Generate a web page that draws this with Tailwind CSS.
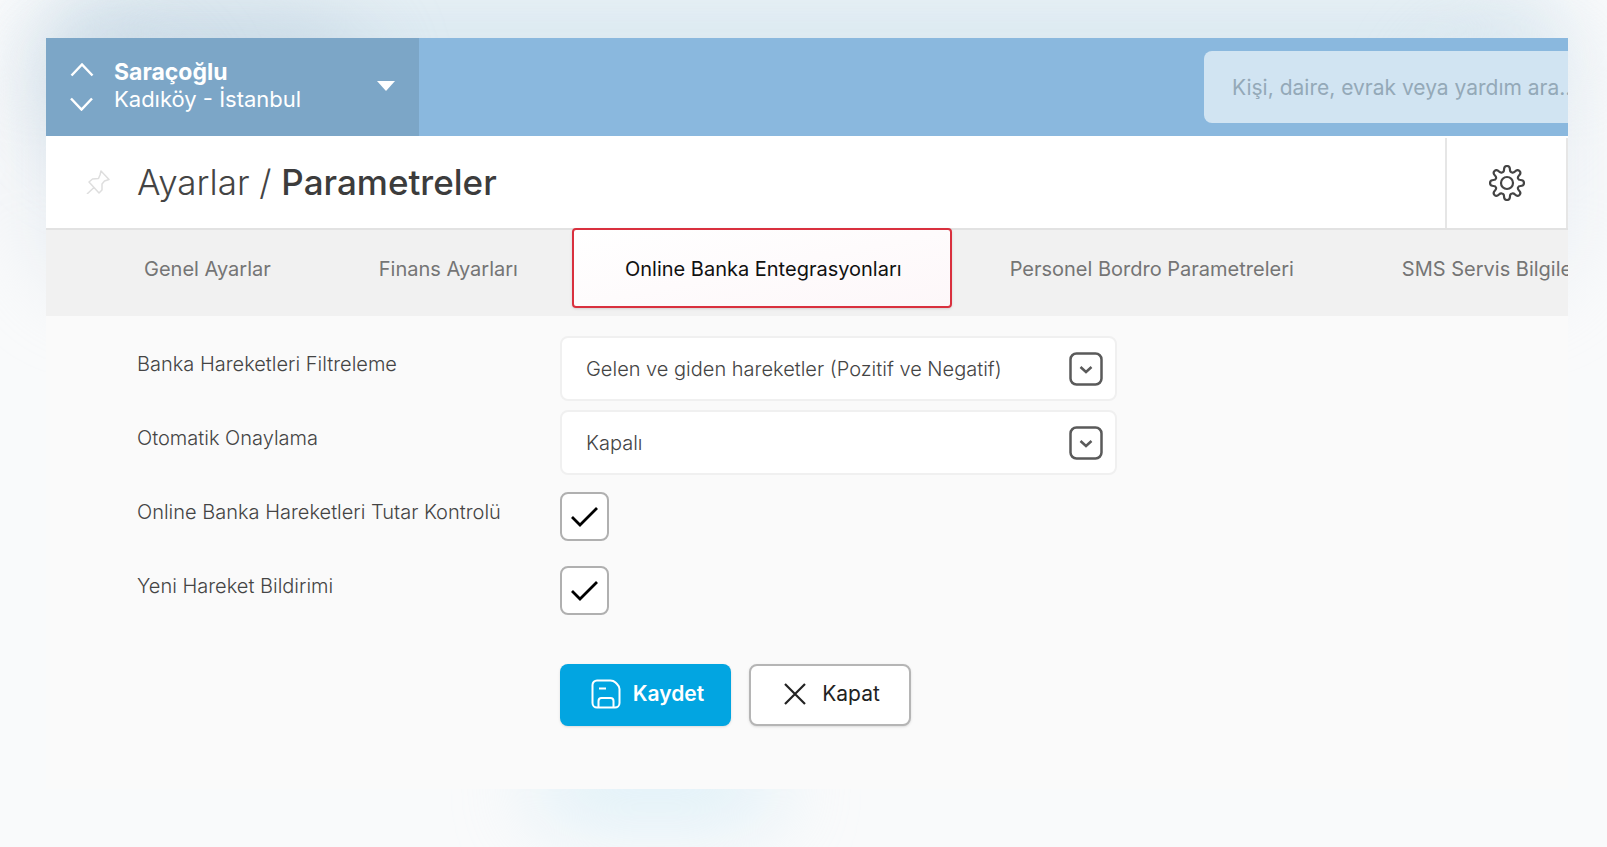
<!DOCTYPE html>
<html lang="tr">

<head>
    <meta charset="UTF-8" />
    <meta name="viewport" content="width=device-width, initial-scale=1.0" />
    <title>Ayarlar / Parametreler</title>
    <script src="https://cdn.jsdelivr.net/npm/@tailwindcss/browser@4"></script>
</head>

<body class="relative min-h-screen overflow-hidden bg-[#f9fafb] font-['Inter',sans-serif] text-[#444]">
    <!-- Soft background glow -->
    <div class="absolute inset-x-10 -top-4 h-36 rounded-full bg-[#d2e3ee]/80 blur-2xl"></div>
    <div class="absolute top-4 left-12 h-36 w-80 rounded-full bg-[#bccfdd]/60 blur-2xl"></div>
    <div class="absolute top-10 left-8 h-64 w-40 rounded-full bg-[#d5dfea]/50 blur-2xl"></div>
    <div class="absolute top-10 right-6 h-64 w-40 rounded-full bg-[#dfe8ef]/50 blur-2xl"></div>
    <div class="absolute bottom-8 left-1/3 h-14 w-60 rounded-full bg-[#cdeaf6]/80 blur-2xl"></div>

    <div class="relative mx-[39px] mt-[38px] ml-[46px] min-h-[751px] overflow-hidden bg-[#fafafa]">
        <!-- Top bar -->
        <header class="flex h-[98px] justify-between bg-[#8ab8de]">
            <button type="button" class="flex w-[373px] items-center bg-[#7ca6c7] pr-6 pb-0.5 pl-6 text-left text-white">
                <svg class="h-[50px] w-6" viewBox="0 0 24 50" fill="none" stroke="currentColor" stroke-width="2.500">
                    <path d="M1.500 14.500 12 3.500l10.500 11M1 37.500l10.500 11 10.500-11" />
                </svg>
                <span class="ml-5 flex-1 text-[22px] leading-[27px]">
                    <strong class="block text-[23px] font-bold">Saraçoğlu</strong>
                    <span class="block">Kadıköy - İstanbul</span>
                </span>
                <svg class="h-[10px] w-[18px]" viewBox="0 0 18 10" fill="currentColor"><path d="M0 0h18L9 10z" /></svg>
            </button>
            <div class="flex w-[364px] items-center">
                <input type="search" aria-label="Arama" placeholder="Kişi, daire, evrak veya yardım ara..."
                    class="h-[72px] w-[420px] shrink-0 rounded-lg bg-[#d1e4f2] px-7 text-[21px] text-[#555] placeholder:text-[#94a9b8]" />
            </div>
        </header>

        <!-- Page title -->
        <div class="flex h-[92px] items-center bg-white">
            <button type="button" aria-label="Sabitle" class="ml-10 text-[#dedede]">
                <svg class="size-6" viewBox="0 0 24 24" fill="none" stroke="currentColor" stroke-width="1.500" stroke-linejoin="round">
                    <path d="M15 1 23 9.500l-4.500 1.500-2.500 3v6l-3 3L3 12l3.500-3 6-.5L14 5zM8 17.500 1 24" />
                </svg>
            </button>
            <h1 class="ml-[27px] flex-1 text-[35px] font-light">Ayarlar / <span class="font-medium text-[#3c3c3c]">Parametreler</span></h1>
            <button type="button" aria-label="Ayarlar" class="mt-0.5 flex h-[90px] w-[123px] items-center justify-center border-x-2 border-[#e6e6e6]">
                <svg class="size-9" viewBox="0 0 36 36" fill="none" stroke="currentColor" stroke-width="2.200" stroke-linejoin="round">
                    <path d="M15 5q0-4 3-4t3 4q0 2 2 2.500 1.500.5 3-1 2.500-2.500 4.500-.5t-.5 4.500q-1.500 1.500-1 3 .5 1.500 2.500 1.500 3.500 0 3.500 3t-3.500 3q-2 0-2.500 1.500-.5 1.500 1 3 2.500 2.500.5 4.500t-4.500-.5q-1.500-1.500-3-1-2 .5-2 2.500 0 4-3 4t-3-4q0-2-2-2.500-1.500-.5-3 1-2.500 2.500-4.500.5t.5-4.500q1.500-1.500 1-3-.5-1.500-2.500-1.500-3.500 0-3.500-3t3.500-3q2 0 2.500-1.500.5-1.500-1-3-2.500-2.500-.5-4.500t4.500.5q1.500 1.500 3 1 2-.5 2-2.500z" />
                    <circle cx="18" cy="18" r="6" />
                </svg>
            </button>
        </div>

        <!-- Tabs -->
        <nav class="flex h-[88px] border-t-2 border-[#e2e2e2] bg-[#f1f1f1] pl-11 text-[20px] whitespace-nowrap text-[#757575]">
            <a href="#" class="flex h-[78px] items-center px-[54px]">Genel Ayarlar</a>
            <a href="#" class="flex h-[78px] items-center px-[54px]">Finans Ayarları</a>
            <a href="#" aria-current="page" class="-mt-0.5 mr-1 flex h-20 items-center rounded border-2 border-[#d9303e] bg-linear-to-br from-white to-[#fdf7f9] pt-0.5 pr-12 pl-[51px] text-[#111] shadow">Online Banka Entegrasyonları</a>
            <a href="#" class="flex h-[78px] items-center px-[54px]">Personel Bordro Parametreleri</a>
            <a href="#" class="flex h-[78px] items-center px-[54px]">SMS Servis Bilgileri</a>
        </nav>

        <!-- Form -->
        <form class="grid grid-cols-[423px_557px] gap-y-[9px] pt-5 pl-[91px] text-[20px]">
            <label for="filter" class="self-center pb-[10px] font-light">Banka Hareketleri Filtreleme</label>
            <div class="relative">
                <select id="filter" class="h-[65px] w-full appearance-none rounded-lg border-2 border-[#f0f0f0] bg-white pr-16 pl-6 font-light">
                    <option>Gelen ve giden hareketler (Pozitif ve Negatif)</option>
                </select>
                <svg class="pointer-events-none absolute top-4 right-[14px] size-[34px]" viewBox="0 0 34 34" fill="none" stroke="#5a5a5a" stroke-width="2.500">
                    <rect x="1.500" y="1.500" width="31" height="31" rx="6" />
                    <path d="M11.500 15l5.500 5 5.500-5" />
                </svg>
            </div>

            <label for="approve" class="self-center pb-[10px] font-light">Otomatik Onaylama</label>
            <div class="relative">
                <select id="approve" class="h-[65px] w-full appearance-none rounded-lg border-2 border-[#f0f0f0] bg-white pr-16 pl-6 font-light">
                    <option>Kapalı</option>
                </select>
                <svg class="pointer-events-none absolute top-4 right-[14px] size-[34px]" viewBox="0 0 34 34" fill="none" stroke="#5a5a5a" stroke-width="2.500">
                    <rect x="1.500" y="1.500" width="31" height="31" rx="6" />
                    <path d="M11.500 15l5.500 5 5.500-5" />
                </svg>
            </div>

            <label for="amount" class="self-center pb-[10px] font-light">Online Banka Hareketleri Tutar Kontrolü</label>
            <div class="relative flex h-[65px] items-center">
                <input type="checkbox" id="amount" checked class="peer size-[49px] appearance-none rounded-lg border-2 border-[#b0b0b0] bg-white" />
                <svg class="pointer-events-none invisible absolute left-[11px] h-5 w-7 peer-checked:visible" viewBox="0 0 28 20" fill="none" stroke="#000" stroke-width="2.800">
                    <path d="M1 10l8 8L26 1" />
                </svg>
            </div>

            <label for="notify" class="self-center pb-[10px] font-light">Yeni Hareket Bildirimi</label>
            <div class="relative flex h-[65px] items-center">
                <input type="checkbox" id="notify" checked class="peer size-[49px] appearance-none rounded-lg border-2 border-[#b0b0b0] bg-white" />
                <svg class="pointer-events-none invisible absolute left-[11px] h-5 w-7 peer-checked:visible" viewBox="0 0 28 20" fill="none" stroke="#000" stroke-width="2.800">
                    <path d="M1 10l8 8L26 1" />
                </svg>
            </div>

            <div class="col-start-2 mt-8 flex gap-[18px] text-[21px]">
                <button type="button" class="flex h-[62px] w-[171px] items-center justify-center gap-3 rounded-lg bg-[#02a5e1] pb-0.5 pl-1 font-semibold text-white shadow-sm">
                    <svg class="size-[30px]" viewBox="0 0 30 30" fill="none" stroke="currentColor" stroke-width="2">
                        <path d="M6 1.500h13.500q3 0 5 2l1.500 1.500q2.500 2.500 2.500 5V24a4.500 4.500 0 0 1-4.500 4.500H6A4.500 4.500 0 0 1 1.500 24V6A4.500 4.500 0 0 1 6 1.500zM8 9.500h7M7.500 28v-6a3 3 0 0 1 3-3h9a3 3 0 0 1 3 3v6" />
                    </svg>
                    Kaydet
                </button>
                <button type="button" class="flex h-[62px] w-[162px] items-center justify-center gap-4 rounded-lg border-2 border-[#b5b5b5] bg-white pb-0.5 pl-1 text-[#222] shadow-sm">
                    <svg class="size-[22px]" viewBox="0 0 22 22" fill="none" stroke="currentColor" stroke-width="2.200"><path d="M1 1l20 20M21 1 1 21" /></svg>
                    Kapat
                </button>
            </div>
        </form>
    </div>
</body>

</html>
